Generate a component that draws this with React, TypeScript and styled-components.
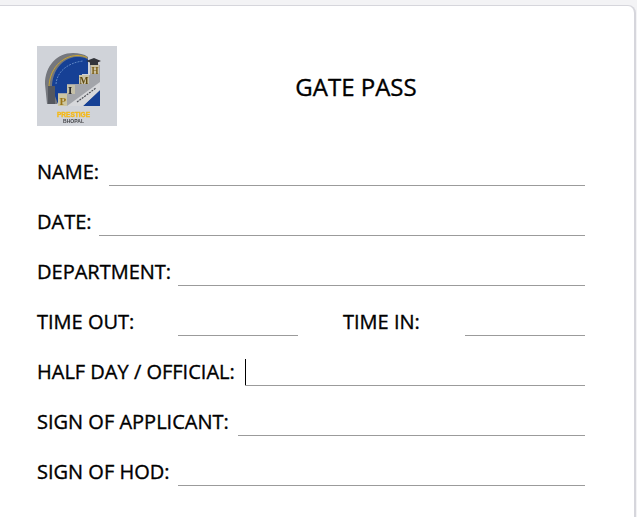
import React from "react";
import styled, { createGlobalStyle } from "styled-components";

const GlobalStyle = createGlobalStyle`
  html, body {
    margin: 0;
    padding: 0;
    height: 100%;
    background: #f3f3f5;
    overflow: hidden;
  }
`;

const Page = styled.div`
  width: 637px;
  height: 517px;
  padding-top: 5px;
  box-sizing: border-box;
  overflow: hidden;
`;

const Card = styled.form`
  box-sizing: border-box;
  width: 646px;
  height: 540px;
  margin-left: -10px;
  padding: 40px 49px 0 47px;
  background: #ffffff;
  border: 1px solid #d6d6dc;
  border-width: 1px 2px 0 0;
  border-radius: 0 8px 0 0;
  font-family: "Open Sans", "Noto Sans", sans-serif;
  color: #000000;
`;

const Header = styled.header`
  display: flex;
  align-items: center;
  height: 80px;
  margin-bottom: 10px;
`;

const Logo = styled.svg`
  display: block;
  flex: none;
  width: 80px;
  height: 80px;
`;

const Title = styled.h1`
  flex: 1;
  margin: 0;
  padding: 2px 0 0 10px;
  text-align: center;
  font-size: 24px;
  font-weight: 400;
  line-height: 32px;
  -webkit-text-stroke: 0.35px #000000;
`;

const Row = styled.div`
  display: flex;
  align-items: flex-end;
  height: 50px;
`;

const Label = styled.label<{ $width: number }>`
  flex: none;
  width: ${(props) => props.$width}px;
  margin-right: 9px;
  padding-bottom: 1px;
  font-size: 20px;
  font-weight: 400;
  line-height: 26px;
  white-space: nowrap;
  -webkit-text-stroke: 0.35px #000000;
`;

const Field = styled.span<{ $width?: number }>`
  position: relative;
  display: block;
  flex: ${(props) => (props.$width ? "none" : "1")};
  width: ${(props) => (props.$width ? `${props.$width}px` : "auto")};
`;

const Input = styled.input`
  display: block;
  box-sizing: border-box;
  width: 100%;
  height: 27px;
  padding: 0;
  border: 0;
  border-bottom: 1px solid #9b9b9b;
  outline: none;
  background: transparent;
`;

const Caret = styled.i`
  position: absolute;
  left: 0;
  top: 0;
  width: 1px;
  height: 26px;
  background: #000000;
`;

const Spacer = styled.span`
  flex: none;
  width: 45px;
`;

const LogoLetter = styled.text`
  font-family: "Liberation Serif", serif;
  font-weight: 700;
  font-size: 11px;
`;

const LogoCaption = styled.text`
  font-family: "Liberation Sans", sans-serif;
  font-weight: 700;
`;

const PrestigeLogo = () => (
  <Logo viewBox="0 0 80 80">
    <defs>
      <filter id="soft" x="0" y="0" width="100%" height="100%">
        <feGaussianBlur stdDeviation="0.4" />
      </filter>
    </defs>
    <rect width="80" height="80" fill="#d0d3d9" />
    <g filter="url(#soft)">
      <path d="M10 58 8 38C8 20 20 7 36 7c6 0 11 1 15 4v8L30 30l-10 28z" fill="#74777d" />
      <path d="M15 42C15 24 26 12 39 11c5 0 9 .5 12 2.500V28h-6v10h-9v9h-9v11h-6z" fill="#123f95" />
      <path d="M12 42C12 23 25 10 40 9.500c4 0 7 .5 10 2" fill="none" stroke="#c9a52e" strokeWidth="1" />
      <path d="M19 38C20 26 30 17 46 15" fill="none" stroke="#6c90c9" strokeWidth="0.9" strokeDasharray="2 1" />
      <path d="M11 40h7v18h-7z" fill="#55585e" />
      <path d="M21 60V47h9v-9h12v-9h11V19h10v41z" fill="#a3a5aa" />
      <path d="M46 60 63 44v16z" fill="#123f95" />
      <path d="M30 60 63 36v8L46 60z" fill="#d7d8db" />
      <path d="M40 56 59 42" stroke="#4f5258" strokeWidth="1.200" strokeDasharray="2 1" />
      <rect x="21" y="48" width="9" height="12" fill="#cdc6a2" />
      <rect x="30" y="39" width="8" height="9" fill="#c5c0a8" />
      <rect x="42" y="29" width="10" height="9" fill="#c9c2a6" />
      <rect x="54" y="18" width="8" height="10" fill="#c9c2a6" />
      <LogoLetter x="22.500" y="59" fill="#9a7416">P</LogoLetter>
      <LogoLetter x="31" y="47.500" fill="#2c2c2c">I</LogoLetter>
      <LogoLetter x="42.500" y="37.500" fill="#5f480e" textLength="9" lengthAdjust="spacingAndGlyphs">M</LogoLetter>
      <LogoLetter x="54.500" y="28" fill="#7a5c14" textLength="7" lengthAdjust="spacingAndGlyphs">H</LogoLetter>
      <path d="M49 15l8-3 7 3-7 3z" fill="#33343a" />
      <rect x="53" y="15" width="8" height="4" fill="#33343a" />
      <LogoCaption x="20" y="71" fontSize="8" fill="#f5b916" stroke="#f5b916" strokeWidth="0.4" textLength="33" lengthAdjust="spacingAndGlyphs">PRESTIGE</LogoCaption>
      <LogoCaption x="26" y="76.500" fontSize="5.500" fill="#45464a" textLength="21" lengthAdjust="spacingAndGlyphs">BHOPAL</LogoCaption>
    </g>
  </Logo>
);

const App = () => (
  <>
    <GlobalStyle />
    <Page>
      <Card>
        <Header>
          <PrestigeLogo />
          <Title>GATE PASS</Title>
        </Header>
        <Row>
          <Label $width={63}>NAME:</Label>
          <Field>
            <Input />
          </Field>
        </Row>
        <Row>
          <Label $width={53}>DATE:</Label>
          <Field>
            <Input />
          </Field>
        </Row>
        <Row>
          <Label $width={132}>DEPARTMENT:</Label>
          <Field>
            <Input />
          </Field>
        </Row>
        <Row>
          <Label $width={132}>TIME OUT:</Label>
          <Field $width={120}>
            <Input />
          </Field>
          <Spacer />
          <Label $width={113}>TIME IN:</Label>
          <Field>
            <Input />
          </Field>
        </Row>
        <Row>
          <Label $width={199}>HALF DAY / OFFICIAL:</Label>
          <Field>
            <Input />
            <Caret />
          </Field>
        </Row>
        <Row>
          <Label $width={192}>SIGN OF APPLICANT:</Label>
          <Field>
            <Input />
          </Field>
        </Row>
        <Row>
          <Label $width={132}>SIGN OF HOD:</Label>
          <Field>
            <Input />
          </Field>
        </Row>
      </Card>
    </Page>
  </>
);

export default App;
